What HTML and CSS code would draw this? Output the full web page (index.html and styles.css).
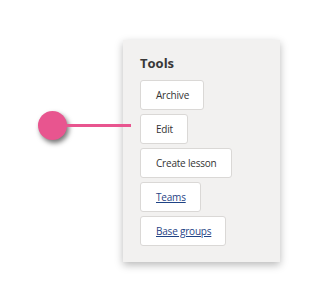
FILE: index.html
```html
<!DOCTYPE html>
<html lang="en">
<head>
  <meta charset="UTF-8" />
  <title>Tools</title>
  <link rel="stylesheet" href="styles.css">
</head>
<body>
  <div class="stage">
    <div class="pointer">
      <span class="pointer-dot"></span>
      <span class="pointer-line"></span>
    </div>

    <div class="tools-panel">
      <h3>Tools</h3>
      <div class="tool-list">
        <button class="tool-btn">Archive</button>
        <button class="tool-btn">Edit</button>
        <button class="tool-btn">Create lesson</button>
        <a class="tool-btn link" href="#">Teams</a>
        <a class="tool-btn link" href="#">Base groups</a>
      </div>
    </div>
  </div>
</body>
</html>
```

FILE: styles.css
```css
body {
  margin: 0;
  background: #ffffff;
  font-family: 'Open Sans', sans-serif;
}

.stage {
  position: relative;
  width: 317px;
  height: 287px;
  padding: 40px 0 0 123px;
  box-sizing: border-box;
}

.tools-panel {
  width: 157px;
  height: 222px;
  box-sizing: border-box;
  background: #f2f1f0;
  padding: 14px 0 0 17px;
  box-shadow: 0 3px 8px rgba(0, 0, 0, 0.28);
}

h3 {
  margin: 0 0 8px 0;
  font-size: 13px;
  font-weight: 700;
  color: #383838;
  line-height: 18px;
}

.tool-list {
  display: flex;
  flex-direction: column;
  align-items: flex-start;
  gap: 4px;
}

.tool-btn {
  display: inline-block;
  height: 30px;
  line-height: 28px;
  padding: 0 14px 0 15px;
  box-sizing: border-box;
  background: #ffffff;
  border: 1px solid #dad8d6;
  border-radius: 3px;
  font-family: 'Open Sans', sans-serif;
  font-size: 10px;
  letter-spacing: -0.2px;
  color: #333333;
  text-decoration: none;
  cursor: pointer;
}

.tool-btn.link {
  color: #1f4385;
  text-decoration: underline;
}

.pointer {
  position: absolute;
  left: 38px;
  top: 111px;
  display: flex;
  align-items: center;
  z-index: 2;
}

.pointer-dot {
  width: 29px;
  height: 29px;
  border-radius: 50%;
  background: #e8558f;
  box-shadow: 2px 3px 5px rgba(0, 0, 0, 0.55);
  flex-shrink: 0;
}

.pointer-line {
  width: 66px;
  height: 3px;
  margin-left: -2px;
  background: #e8558f;
}
```
